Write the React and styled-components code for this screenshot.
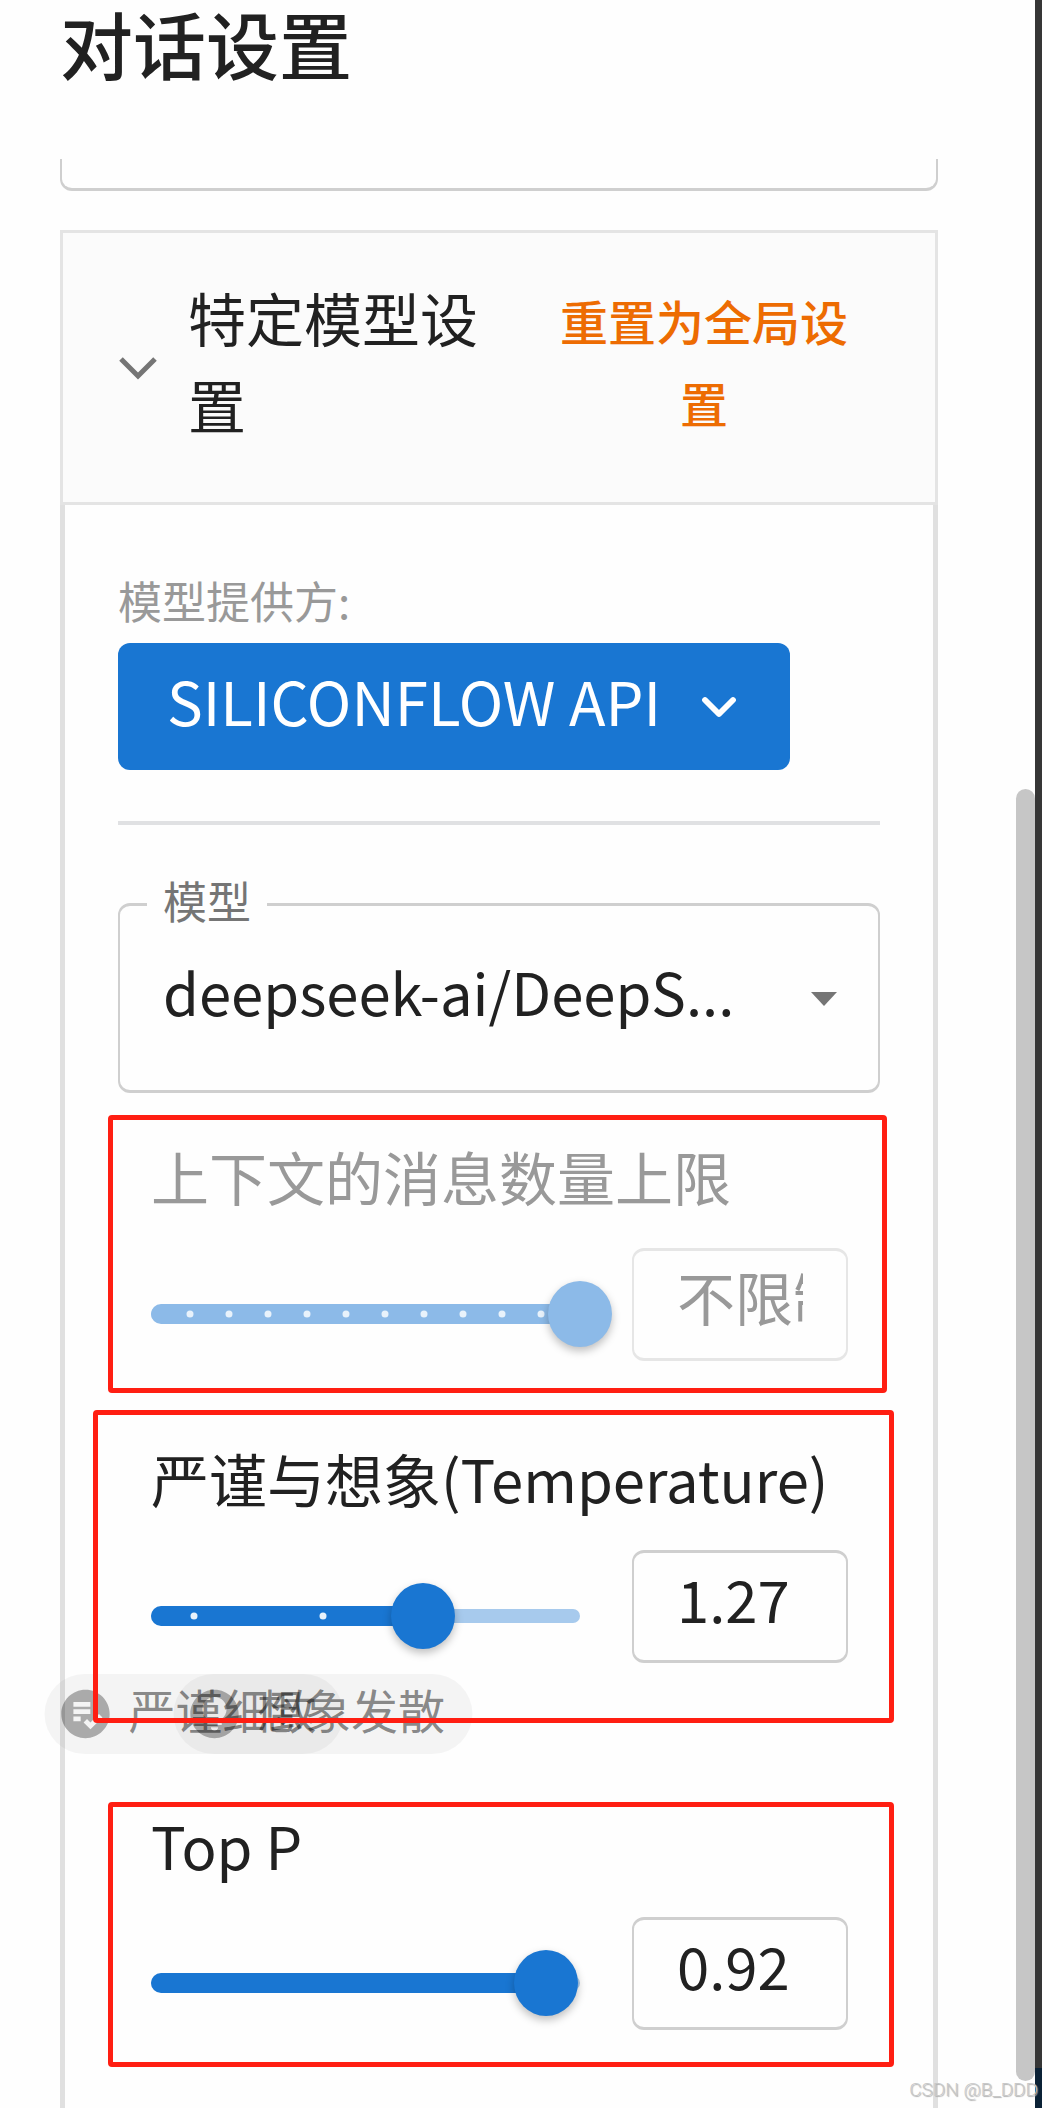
import React, { useState } from 'react';
import styled, { createGlobalStyle } from 'styled-components';
import { MdLightbulbCircle, MdPlaylistAddCheckCircle } from 'react-icons/md';
import { ChevronDown } from 'lucide-react';

const GlobalStyle = createGlobalStyle`
  * {
    box-sizing: border-box;
  }

  body {
    margin: 0;
    background: #fefefe;
    color: #212121;
    font-family: 'Noto Sans CJK SC', 'Noto Sans', sans-serif;
    font-size: 58px;
  }

  button, input, select {
    font: inherit;
    color: inherit;
  }
`;

const Page = styled.div`
  position: relative;
  display: flex;
  min-height: 100vh;
  overflow: hidden;
`;

const Main = styled.main`
  flex: 1;
  min-width: 0;
  display: flex;
  flex-direction: column;
  padding: 0 78px 0 60px;
`;

const Gutter = styled.div`
  width: 19px;
  display: flex;
  flex-direction: column;

  &::before {
    content: '';
    flex: 789;
  }

  &::after {
    content: '';
    flex: 27;
  }
`;

const ScrollThumb = styled.div`
  flex: 1292;
  border-radius: 10px;
  background: #c6c6c6;
`;

const Edge = styled.div`
  width: 7px;
  background: linear-gradient(to top, #0b2236 40px, #363636 40px);
`;

const Title = styled.h1`
  margin: 0;
  padding-bottom: 75px;
  font-size: 73px;
  font-weight: 500;
  line-height: 84px;
`;

const FieldBottom = styled.div`
  height: 32px;
  margin-bottom: 39px;
  border: solid #cfcfcf;
  border-width: 0 2px 3px;
  border-radius: 0 0 12px 12px;
`;

const Accordion = styled.section`
  flex: 1;
  display: flex;
  flex-direction: column;
`;

const AccordionHeader = styled.header`
  display: grid;
  grid-template-columns: 76px minmax(0, 1fr) 322px;
  column-gap: 12px;
  align-items: center;
  min-height: 275px;
  padding: 0 70px 0 37px;
  border: 3px solid #e4e4e4;
  background: #fbfbfb;
`;

const ExpandButton = styled.button`
  display: flex;
  padding: 0;
  border: none;
  background: none;
  color: #757575;
  cursor: pointer;
`;

const AccordionTitle = styled.h2`
  margin: 0 0 14px;
  font-size: 58px;
  font-weight: 400;
  line-height: 87px;
`;

const ResetButton = styled.button`
  margin: 0 0 14px;
  padding: 0 16px;
  border: none;
  background: none;
  color: #ed6c02;
  font-size: 48px;
  font-weight: 500;
  line-height: 82px;
  cursor: pointer;
`;

const AccordionBody = styled.div`
  flex: 1;
  display: flex;
  flex-direction: column;
  padding: 63px 53px 77px;
  border: solid #e0e0e0;
  border-width: 0 5px;
`;

const Caption = styled.span`
  margin-bottom: 11px;
  color: #999;
  font-size: 44px;
  line-height: 64px;
`;

const ProviderButton = styled.button`
  align-self: flex-start;
  display: flex;
  align-items: center;
  gap: 30px;
  height: 127px;
  padding: 0 43px 0 49px;
  border: none;
  border-radius: 12px;
  background: #1976d2;
  color: #fff;
  font-size: 60px;
  cursor: pointer;

  span {
    padding-bottom: 14px;
  }
`;

const Divider = styled.hr`
  width: 100%;
  height: 4px;
  margin: 51px 0 43px;
  border: none;
  background: #e0e1e3;
`;

const SelectField = styled.fieldset`
  min-width: 0;
  margin: 0 0 40px;
  padding: 0 27px 48px;
  border: solid #cfcfcf;
  border-width: 3px 2px;
  border-radius: 12px;

  legend {
    padding: 0 16px 8px;
    color: #757575;
    font-size: 44px;
    line-height: 64px;
  }
`;

const SelectBox = styled.div`
  display: grid;
  align-items: center;
  height: 102px;
  padding: 0 14px 0 16px;

  > * {
    grid-area: 1 / 1;
  }
`;

const Select = styled.select`
  width: 100%;
  height: 102px;
  padding: 0;
  border: none;
  outline: none;
  background: none;
  appearance: none;
`;

const Arrow = styled.span`
  justify-self: end;
  margin-top: 16px;
  border: solid transparent;
  border-width: 14px 13px 0;
  border-top-color: #757575;
  pointer-events: none;
`;

const Block = styled.div`
  position: relative;
  padding: 0 32px 0 33px;
  margin-bottom: ${({ $gap }) => $gap || 0}px;
  color: ${({ $disabled }) => ($disabled ? '#999' : 'inherit')};

  /* red highlight frame drawn over the block */
  &::after {
    content: '';
    position: absolute;
    inset: ${({ $frame }) => $frame};
    border: 5px solid #ff1e12;
    border-radius: 4px;
    pointer-events: none;
  }
`;

const BlockLabel = styled.label`
  display: block;
  margin-bottom: 28px;
  line-height: 87px;
  white-space: nowrap;
`;

const Controls = styled.div`
  display: grid;
  grid-template-columns: minmax(0, 1fr) 216px;
  gap: 11px 52px;
  align-items: center;
`;

const SliderBox = styled.div`
  position: relative;
  display: grid;
  align-items: center;
  margin-top: 18px;
  color: ${({ $disabled }) => ($disabled ? '#8cbae8' : '#1976d2')};

  > div,
  > input {
    grid-area: 1 / 1;
  }
`;

const Rail = styled.div`
  height: 14px;
  border-radius: 7px;
  background: #a7caed;
`;

const Fill = styled.div`
  height: 20px;
  border-radius: 10px;
  background: currentColor;
`;

const Mark = styled.span`
  position: absolute;
  top: 50%;
  width: 7px;
  height: 7px;
  border-radius: 50%;
  background: #e8f2fb;
  transform: translate(-50%, -50%);
`;

/* the thumb's centre has to reach both ends of the rail */
const Range = styled.input`
  position: relative;
  width: calc(100% + 64px);
  height: 66px;
  margin: 0 -32px;
  background: none;
  appearance: none;

  &::-webkit-slider-thumb {
    width: 64px;
    height: 66px;
    border: none;
    border-radius: 50%;
    background: ${({ disabled }) => (disabled ? '#8cbae8' : '#1976d2')};
    box-shadow: 0 4px 8px rgba(0, 0, 0, 0.25);
    appearance: none;
  }
`;

const ValueInput = styled.input`
  width: 100%;
  height: 113px;
  padding: 0 43px 18px;
  border: solid ${({ disabled }) => (disabled ? '#e6e6e6' : '#cfcfcf')};
  border-width: 3px 2px;
  border-radius: 12px;
  outline: none;
  background: none;
`;

const Chips = styled.div`
  position: relative;
  height: 80px;
`;

const Chip = styled.span`
  position: absolute;
  top: 0;
  display: flex;
  align-items: center;
  gap: 14px;
  height: 80px;
  padding: 0 27px 0 12px;
  border-radius: 40px;
  background: rgba(0, 0, 0, 0.04);
  color: rgba(0, 0, 0, 0.45);
  font-size: 47px;
  line-height: 70px;
  white-space: nowrap;
  transform: translateX(-50%);

  svg {
    flex: none;
    color: rgba(0, 0, 0, 0.3);
  }

  span {
    padding-bottom: 10px;
  }
`;

const Watermark = styled.span`
  position: absolute;
  right: 4px;
  bottom: 6px;
  color: #c8c8c8;
  font-family: Roboto, 'Liberation Sans', sans-serif;
  font-size: 19px;
  font-weight: 300;
  line-height: 24px;
  text-shadow: 1px 1px 1px #b0b0b0;
`;

const ExpandIcon = () => (
  <svg width="76" height="76" viewBox="0 0 76 76" fill="none" stroke="currentColor" strokeWidth="5">
    <path d="M21 29l17 17 17-17" />
  </svg>
);

const Slider = ({ id, value, max, marks = [], disabled, onChange }) => {
  const percent = (value / max) * 100;

  return (
    <SliderBox $disabled={disabled}>
      <Rail />
      <Fill style={{ width: `${percent}%` }} />
      {marks.map((mark) => (
        <Mark key={mark} style={{ left: `${(mark / max) * 100}%` }} />
      ))}
      <Range
        type="range"
        id={id}
        min="0"
        max={max}
        step="0.01"
        value={value}
        disabled={disabled}
        onChange={(e) => onChange(Number(e.target.value))}
      />
    </SliderBox>
  );
};

const App = () => {
  const [contextLimit, setContextLimit] = useState(11);
  const [temperature, setTemperature] = useState(1.27);
  const [topP, setTopP] = useState(0.92);

  return (
    <>
      <GlobalStyle />
      <Page>
        <Main>
          <Title>对话设置</Title>
          <FieldBottom />
          <Accordion>
            <AccordionHeader>
              <ExpandButton type="button" aria-label="展开">
                <ExpandIcon />
              </ExpandButton>
              <AccordionTitle>特定模型设置</AccordionTitle>
              <ResetButton type="button">重置为全局设置</ResetButton>
            </AccordionHeader>
            <AccordionBody>
              <Caption id="provider-label">模型提供方:</Caption>
              <ProviderButton type="button" aria-describedby="provider-label">
                <span>SILICONFLOW API</span>
                <ChevronDown size={56} strokeWidth={2.5} />
              </ProviderButton>
              <Divider />
              <SelectField>
                <legend>
                  <label htmlFor="model">模型</label>
                </legend>
                <SelectBox>
                  <Select id="model" defaultValue="deepseek">
                    <option value="deepseek">deepseek-ai/DeepS...</option>
                  </Select>
                  <Arrow />
                </SelectBox>
              </SelectField>

              <Block $disabled $gap={74} $frame="-18px -7px -32px -10px">
                <BlockLabel htmlFor="context">上下文的消息数量上限</BlockLabel>
                <Controls>
                  <Slider
                    id="context"
                    value={contextLimit}
                    max={11}
                    marks={[1, 2, 3, 4, 5, 6, 7, 8, 9, 10]}
                    disabled
                    onChange={setContextLimit}
                  />
                  <ValueInput type="text" aria-label="上下文的消息数量上限" value="不限制" disabled readOnly />
                </Controls>
              </Block>

              <Block $gap={48} $frame="-25px -14px 31px -25px">
                <BlockLabel htmlFor="temperature">严谨与想象(Temperature)</BlockLabel>
                <Controls>
                  <Slider
                    id="temperature"
                    value={temperature}
                    max={2}
                    marks={[0.2, 0.8]}
                    onChange={setTemperature}
                  />
                  <ValueInput
                    type="text"
                    aria-label="Temperature"
                    value={temperature}
                    onChange={(e) => setTemperature(e.target.value)}
                  />
                  <Chips>
                    <Chip style={{ left: '10%' }}>
                      <MdPlaylistAddCheckCircle size={58} />
                      <span>严谨细致</span>
                    </Chip>
                    <Chip style={{ left: '40%' }}>
                      <MdLightbulbCircle size={58} />
                      <span>想象发散</span>
                    </Chip>
                  </Chips>
                </Controls>
              </Block>

              <Block $frame="0 -14px -37px -10px">
                <BlockLabel htmlFor="top-p">Top P</BlockLabel>
                <Controls>
                  <Slider id="top-p" value={topP} max={1} onChange={setTopP} />
                  <ValueInput
                    type="text"
                    aria-label="Top P"
                    value={topP}
                    onChange={(e) => setTopP(e.target.value)}
                  />
                </Controls>
              </Block>
            </AccordionBody>
          </Accordion>
        </Main>
        <Gutter>
          <ScrollThumb />
        </Gutter>
        <Edge />
        <Watermark>CSDN @B_DDD</Watermark>
      </Page>
    </>
  );
};

export default App;
